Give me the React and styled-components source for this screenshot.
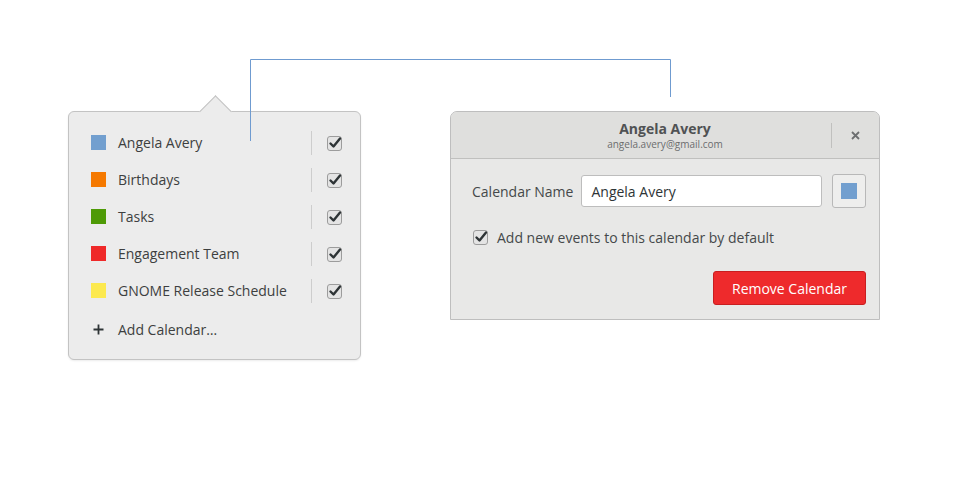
import React from 'react'
import styled, { createGlobalStyle } from 'styled-components'

const GlobalStyle = createGlobalStyle`
    body {
        margin: 0;
        background: #ffffff;
        font-family: "Open Sans", "Noto Sans", sans-serif;
        color: #3d3f40;
    }
`

const Page = styled.div`
    position: relative;
    width: 960px;
    height: 500px;
    box-sizing: border-box;
    padding: 96px 0 0 68px;
    display: flex;
    align-items: flex-start;
    gap: 89px;
`

const Connector = styled.svg`
    position: absolute;
    left: 0;
    top: 0;
    pointer-events: none;
`

const PopoverWrap = styled.div`
    padding-top: 15px;
`

const Popover = styled.div`
    position: relative;
    width: 293px;
    box-sizing: border-box;
    background: #ececec;
    border: 1px solid #c3c3c3;
    border-radius: 6px;
    padding: 12px 16px 10px 22px;
    box-shadow: 0 1px 2px rgba(0, 0, 0, 0.08);
`

const Arrow = styled.div`
    position: absolute;
    left: 135px;
    top: -12px;
    width: 22px;
    height: 22px;
    background: #ececec;
    border-top: 1px solid #c3c3c3;
    border-left: 1px solid #c3c3c3;
    transform: rotate(45deg);
`

const Row = styled.div`
    display: flex;
    align-items: center;
    height: ${({ $h }) => $h || 37}px;
    font-size: 14px;
`

const Swatch = styled.span`
    width: ${({ $size }) => $size || 15}px;
    height: ${({ $size }) => $size || 15}px;
    background: ${({ $color }) => $color};
    flex-shrink: 0;
`

const Label = styled.span`
    margin-left: 12px;
    flex: 1;
    white-space: nowrap;
`

const Sep = styled.span`
    width: 1px;
    height: 24px;
    background: #cdcdcd;
    margin-right: 14px;
`

const Plus = styled.span`
    width: 15px;
    display: flex;
    justify-content: center;
`

const Dialog = styled.div`
    margin-top: 15px;
    width: 430px;
    box-sizing: border-box;
    border: 1px solid #bebebe;
    border-radius: 7px 7px 0 0;
    background: #e8e8e7;
    overflow: hidden;
`

const Header = styled.div`
    height: 46px;
    background: #dfdfdd;
    border-bottom: 1px solid #c0c0be;
    display: flex;
    align-items: center;
`

const Titles = styled.div`
    flex: 1;
    display: flex;
    flex-direction: column;
    align-items: center;
    padding-left: 48px;
`

const Title = styled.div`
    font-weight: 700;
    font-size: 14px;
    color: #505254;
    line-height: 17px;
`

const Subtitle = styled.div`
    font-size: 10px;
    color: #6b6d6e;
    line-height: 14px;
`

const HeaderSep = styled.span`
    width: 1px;
    height: 25px;
    background: #c0c0be;
`

const Close = styled.span`
    width: 47px;
    display: flex;
    justify-content: center;
`

const Body = styled.div`
    padding: 15px 13px 14px 21px;
    display: flex;
    flex-direction: column;
`

const NameRow = styled.div`
    display: flex;
    align-items: center;
    font-size: 14px;
`

const FieldLabel = styled.span`
    margin-right: 8px;
    color: #45484a;
    white-space: nowrap;
`

const Input = styled.div`
    flex: 1;
    height: 32px;
    box-sizing: border-box;
    background: #ffffff;
    border: 1px solid #bdbdbd;
    border-radius: 3px;
    padding: 0 9px;
    display: flex;
    align-items: center;
    color: #2e3436;
`

const ColorButton = styled.div`
    margin-left: 10px;
    width: 34px;
    height: 34px;
    box-sizing: border-box;
    border: 1px solid #b8b8b8;
    border-radius: 3px;
    background: #eeeeed;
    display: flex;
    align-items: center;
    justify-content: center;
`

const CheckRow = styled.div`
    display: flex;
    align-items: center;
    gap: 7px;
    margin-top: 20px;
    height: 18px;
    font-size: 14px;
    color: #45484a;
`

const Actions = styled.div`
    display: flex;
    justify-content: flex-end;
    margin-top: 25px;
`

const DangerButton = styled.div`
    width: 153px;
    height: 34px;
    box-sizing: border-box;
    background: #ee2a2c;
    border: 1px solid #c81e20;
    border-radius: 3px;
    color: #ffffff;
    font-size: 14px;
    display: flex;
    align-items: center;
    justify-content: center;
`

const Check = () => (
    <svg width="18" height="18" viewBox="0 0 18 18">
        <rect x="1.5" y="2.5" width="14" height="14" rx="2.5" fill="#e4e4e4" stroke="#9c9c9c" />
        <path d="M4.5 9.5 L7.5 12.5 L14 4.5" fill="none" stroke="#2e3436" strokeWidth="2.4" strokeLinecap="round" strokeLinejoin="round" />
    </svg>
)

const calendars = [
    { name: 'Angela Avery', color: '#729fcf' },
    { name: 'Birthdays', color: '#f57900' },
    { name: 'Tasks', color: '#4e9a06' },
    { name: 'Engagement Team', color: '#ef2929' },
    { name: 'GNOME Release Schedule', color: '#fce94f' },
]

const App = () => {
    return (
        <>
            <GlobalStyle />
            <Page>
                <PopoverWrap>
                    <Popover>
                        <Arrow />
                        {calendars.map((c) => (
                            <Row key={c.name}>
                                <Swatch $color={c.color} />
                                <Label>{c.name}</Label>
                                <Sep />
                                <Check />
                            </Row>
                        ))}
                        <Row $h={40}>
                            <Plus>
                                <svg width="11" height="11" viewBox="0 0 11 11">
                                    <path d="M5.5 0.5 V10.5 M0.5 5.5 H10.5" stroke="#2e3436" strokeWidth="1.8" />
                                </svg>
                            </Plus>
                            <Label>Add Calendar…</Label>
                        </Row>
                    </Popover>
                </PopoverWrap>

                <Dialog>
                    <Header>
                        <Titles>
                            <Title>Angela Avery</Title>
                            <Subtitle>angela.avery@gmail.com</Subtitle>
                        </Titles>
                        <HeaderSep />
                        <Close>
                            <svg width="9" height="9" viewBox="0 0 9 9">
                                <path d="M1 1 L8 8 M8 1 L1 8" stroke="#6d6f70" strokeWidth="1.8" />
                            </svg>
                        </Close>
                    </Header>
                    <Body>
                        <NameRow>
                            <FieldLabel>Calendar Name</FieldLabel>
                            <Input>Angela Avery</Input>
                            <ColorButton>
                                <Swatch $color="#729fcf" $size={16} />
                            </ColorButton>
                        </NameRow>
                        <CheckRow>
                            <Check />
                            <span>Add new events to this calendar by default</span>
                        </CheckRow>
                        <Actions>
                            <DangerButton>Remove Calendar</DangerButton>
                        </Actions>
                    </Body>
                </Dialog>

                <Connector width="960" height="500">
                    <path d="M250.5 141 V59.5 H670.5 V97" fill="none" stroke="#6f9bd0" strokeWidth="1" />
                </Connector>
            </Page>
        </>
    )
}

export default App
